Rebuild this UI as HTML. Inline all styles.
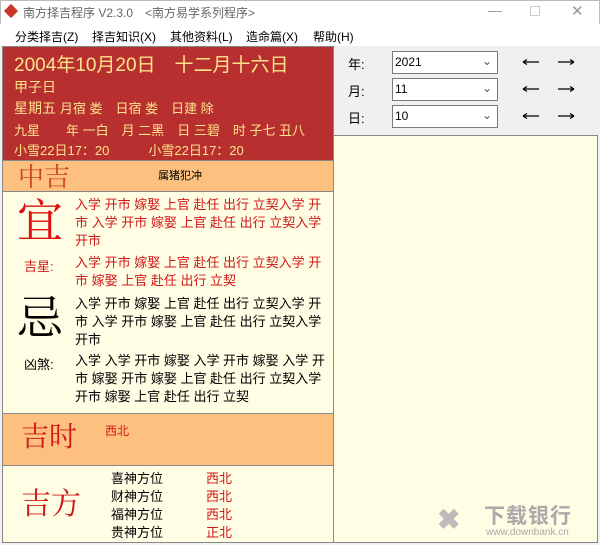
<!DOCTYPE html>
<html><head><meta charset="utf-8"><style>
*{margin:0;padding:0;box-sizing:border-box}
body{width:600px;height:545px;overflow:hidden;background:#f0f0f0;font-family:"Liberation Sans","Noto Sans CJK SC",sans-serif;font-size:12px;position:relative;color:#000}
.a{position:absolute;white-space:nowrap}
.serif{font-family:"Liberation Serif","Noto Serif CJK SC",serif}
.t{font-size:13px;line-height:18px;white-space:normal;width:254px;left:75px}
</style></head><body>
<div class="a" style="left:0;top:0;width:600px;height:24px;background:#fff;border:1px solid #bbb;border-bottom:none"></div>
<div class="a" style="left:6px;top:6px;width:10px;height:10px;background:#c8382a;transform:rotate(45deg)"></div>
<div class="a" style="left:23px;top:4px;font-size:12px;color:#666">南方择吉程序 V2.3.0　&lt;南方易学系列程序&gt;</div>
<div class="a" style="left:488px;top:2px;color:#999;font-size:14px">—</div>
<div class="a" style="left:530px;top:6px;width:10px;height:10px;border:1px solid #ccc"></div>
<div class="a" style="left:571px;top:2px;color:#999;font-size:15px">✕</div>
<div class="a" style="left:0;top:24px;width:600px;height:22px;background:#fff"></div>
<div class="a" style="left:15px;top:28px">分类择吉(Z)</div>
<div class="a" style="left:92px;top:28px">择吉知识(X)</div>
<div class="a" style="left:170px;top:28px">其他资料(L)</div>
<div class="a" style="left:246px;top:28px">造命篇(X)</div>
<div class="a" style="left:313px;top:28px">帮助(H)</div>

<div class="a" style="left:2px;top:46px;width:332px;height:497px;border:1px solid #888;background:#fffde3"></div>
<div class="a" style="left:3px;top:47px;width:330px;height:113px;background:#b82f30"></div>
<div class="a" style="left:14px;top:50px;font-size:19px;color:#fde38a">2004年10月20日　十二月十六日</div>
<div class="a" style="left:14px;top:77px;font-size:14px;color:#fde38a">甲子日</div>
<div class="a" style="left:14px;top:98px;font-size:14px;color:#fde38a">星期五 <span style="font-size:13px">月宿 娄　日宿 娄　日建 除</span></div>
<div class="a" style="left:14px;top:120px;font-size:13px;color:#fde38a">九星　　年 一白　月 二黑　日 三碧　时 子七 丑八</div>
<div class="a" style="left:14px;top:140px;font-size:13px;color:#fde38a">小雪22日17：20　　　小雪22日17：20</div>
<div class="a" style="left:3px;top:160px;width:330px;height:32px;background:#fec07e;border-top:1px solid #888;border-bottom:1px solid #888"></div>
<div class="a serif" style="left:18px;top:163px;font-size:26px;line-height:30px;color:#c8461c">中吉</div>
<div class="a" style="left:158px;top:167px;font-size:11px">属猪犯冲</div>

<div class="a serif" style="left:17px;top:196px;font-size:46px;line-height:52px;color:#e01010">宜</div>
<div class="a t" style="top:196px;color:#d01818">入学 开市 嫁娶 上官 赴任 出行 立契入学 开市 入学 开市 嫁娶 上官 赴任 出行 立契入学 开市</div>
<div class="a" style="left:24px;top:256px;font-size:13px;color:#d01818">吉星:</div>
<div class="a t" style="top:254px;color:#d01818">入学 开市 嫁娶 上官 赴任 出行 立契入学 开市 嫁娶 上官 赴任 出行 立契</div>
<div class="a serif" style="left:17px;top:293px;font-size:46px;line-height:52px;color:#000">忌</div>
<div class="a t" style="top:295px">入学 开市 嫁娶 上官 赴任 出行 立契入学 开市 入学 开市 嫁娶 上官 赴任 出行 立契入学 开市</div>
<div class="a" style="left:24px;top:354px;font-size:13px">凶煞:</div>
<div class="a t" style="top:352px">入学 入学 开市 嫁娶 入学 开市 嫁娶 入学 开市 嫁娶 开市 嫁娶 上官 赴任 出行 立契入学 开市 嫁娶 上官 赴任 出行 立契</div>

<div class="a" style="left:3px;top:413px;width:330px;height:53px;background:#fec07e;border-top:1px solid #888;border-bottom:1px solid #888"></div>
<div class="a serif" style="left:21px;top:421px;font-size:28px;line-height:34px;color:#d01818">吉时</div>
<div class="a" style="left:105px;top:422px;color:#d01818">西北</div>
<div class="a serif" style="left:21px;top:487px;font-size:30px;line-height:36px;color:#d01818">吉方</div>
<div class="a" style="left:111px;top:470px;line-height:18px;font-size:13px">喜神方位<br>财神方位<br>福神方位<br>贵神方位</div>
<div class="a" style="left:206px;top:470px;line-height:18px;font-size:13px;color:#d01818">西北<br>西北<br>西北<br>正北</div>

<div class="a" style="left:348px;top:54px;font-size:13px">年:</div>
<div class="a" style="left:348px;top:81px;font-size:13px">月:</div>
<div class="a" style="left:348px;top:108px;font-size:13px">日:</div>
<div class="a" style="left:392px;top:51px;width:106px;height:23px;background:#fff;border:1px solid #7a7a7a;padding:3px 2px">2021<span style="position:absolute;right:5px;top:2px;color:#555">⌄</span></div>
<div class="a" style="left:392px;top:78px;width:106px;height:23px;background:#fff;border:1px solid #7a7a7a;padding:3px 2px">11<span style="position:absolute;right:5px;top:2px;color:#555">⌄</span></div>
<div class="a" style="left:392px;top:105px;width:106px;height:23px;background:#fff;border:1px solid #7a7a7a;padding:3px 2px">10<span style="position:absolute;right:5px;top:2px;color:#555">⌄</span></div>
<svg class="a" style="left:520px;top:50px" width="60" height="80" fill="none" stroke="#000" stroke-width="1.3">
<path d="M3 12H19M3 12L7 9.5M3 12L7 14.5"/><path d="M38 12H54M54 12L50 9.5M54 12L50 14.5"/>
<path d="M3 39H19M3 39L7 36.5M3 39L7 41.5"/><path d="M38 39H54M54 39L50 36.5M54 39L50 41.5"/>
<path d="M3 66H19M3 66L7 63.5M3 66L7 68.5"/><path d="M38 66H54M54 66L50 63.5M54 66L50 68.5"/>
</svg>
<div class="a" style="left:334px;top:135px;width:264px;height:408px;background:#fffde3;border:1px solid #888;border-left:none"></div>
<div class="a" style="left:437px;top:503px;font-size:28px;color:#bbb;font-weight:bold">✖</div>
<div class="a" style="left:484px;top:500px;font-size:21px;color:#aaa;font-weight:bold;letter-spacing:1px">下载银行</div>
<div class="a" style="left:486px;top:527px;font-size:10px;color:#aaa">www.downbank.cn</div>
</body></html>
